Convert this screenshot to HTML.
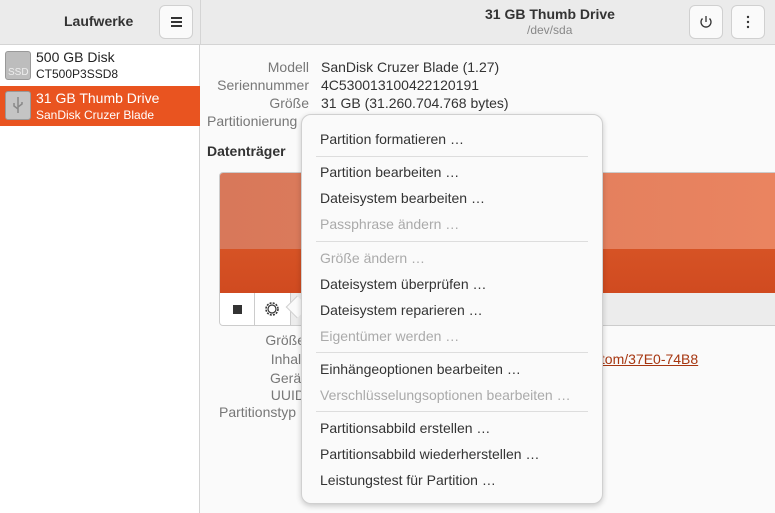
<!DOCTYPE html>
<html><head><meta charset="utf-8"><style>
*{margin:0;padding:0;box-sizing:border-box}
body{width:775px;height:513px;overflow:hidden;background:#fafafa;font-family:"Liberation Sans",sans-serif;font-size:14px;color:#333;position:relative}
.a{position:absolute;white-space:nowrap}
.hdr{position:absolute;left:0;top:0;width:775px;height:45px;background:#ebebeb;border-bottom:1px solid #d4d4d4}
.btn{position:absolute;width:34px;height:34px;border:1px solid #d0d0d0;border-radius:6px;background:#fafafa}
.side{position:absolute;left:0;top:45px;width:200px;height:468px;background:#fff;border-right:1px solid #d4d4d4}
.lab{position:absolute;text-align:right;color:#777;white-space:nowrap}
.menu{position:absolute;left:301px;top:114px;width:302px;height:390px;background:#fafafa;border:1px solid #d0d0d0;border-radius:10px;box-shadow:0 2px 6px rgba(0,0,0,.2)}
.mi{position:absolute;left:18px;white-space:nowrap;color:#333}
.dis{color:#aaa}
.sep{position:absolute;left:14px;width:272px;height:1px;background:#ddd}
</style></head><body>
<div class="hdr">
<div class="a" style="left:64px;top:13px;font-weight:bold;font-size:14px">Laufwerke</div>
<div class="btn" style="left:159px;top:5px"><div style="position:absolute;left:11px;top:11px;width:11px;height:1.5px;background:#333;box-shadow:0 4px 0 #333,0 8px 0 #333"></div></div>
<div style="position:absolute;left:200px;top:0;width:1px;height:45px;background:#d4d4d4"></div>
<div class="a" style="left:485px;top:6px;font-weight:bold">31 GB Thumb Drive</div>
<div class="a" style="left:527px;top:23px;font-size:12px;color:#888">/dev/sda</div>
<div class="btn" style="left:689px;top:5px"><svg width="34" height="34" style="position:absolute;left:-1px;top:-1px"><path d="M13.5 13.5a5 5 0 1 0 7 0M17 11v6" fill="none" stroke="#333" stroke-width="1.3"/></svg></div>
<div class="btn" style="left:731px;top:5px"><svg width="34" height="34" style="position:absolute;left:-1px;top:-1px"><circle cx="17" cy="12" r="1.2" fill="#333"/><circle cx="17" cy="17" r="1.2" fill="#333"/><circle cx="17" cy="22" r="1.2" fill="#333"/></svg></div>
</div>
<div class="side">
<div style="position:absolute;left:5px;top:6px;width:26px;height:29px;border:1px solid #999;border-radius:3px;background:#bdbdbd"><span style="position:absolute;left:2px;top:15px;font-size:10px;color:#eee">SSD</span></div>
<div class="a" style="left:36px;top:4px;color:#222">500 GB Disk</div>
<div class="a" style="left:36px;top:22px;font-size:12px;color:#222">CT500P3SSD8</div>
<div style="position:absolute;left:0;top:41px;width:200px;height:40px;background:#e95420"></div>
<div style="position:absolute;left:5px;top:46px;width:26px;height:29px;border:1px solid #999;border-radius:3px;background:#c4c4c4"><svg width="24" height="27"><path d="M12 5v16M12 17l-4-3v-3M12 15l4-3v-2" fill="none" stroke="#888" stroke-width="1.5"/></svg></div>
<div class="a" style="left:36px;top:45px;color:#fff">31 GB Thumb Drive</div>
<div class="a" style="left:36px;top:63px;font-size:12px;color:#fff">SanDisk Cruzer Blade</div>
</div>
<div class="lab" style="right:466px;top:59px">Modell</div>
<div class="lab" style="right:466px;top:77px">Seriennummer</div>
<div class="lab" style="right:466px;top:95px">Größe</div>
<div class="lab" style="left:207px;top:113px">Partitionierung</div>
<div class="a" style="left:321px;top:59px">SanDisk Cruzer Blade (1.27)</div>
<div class="a" style="left:321px;top:77px">4C530013100422120191</div>
<div class="a" style="left:321px;top:95px">31 GB (31.260.704.768 bytes)</div>
<div class="a" style="left:207px;top:143px;font-weight:bold">Datenträger</div>
<div style="position:absolute;left:219px;top:172px;width:560px;height:154px;border:1px solid #ccc;border-radius:4px;overflow:hidden;background:#ececec">
<div style="height:76px;background:linear-gradient(90deg,#d8785a,#ea8460)"></div>
<div style="height:44px;background:linear-gradient(180deg,#d65325,#d04a20)"></div>
<div style="position:absolute;left:0;top:120px;width:35px;height:34px;background:#fff;border-right:1px solid #ccc"><div style="position:absolute;left:13px;top:12px;width:9px;height:9px;background:#333"></div></div>
<div style="position:absolute;left:35px;top:120px;width:36px;height:34px;background:#fff;border-right:1px solid #ccc"><svg width="36" height="34"><circle cx="17" cy="16" r="6" fill="none" stroke="#333" stroke-width="1.5" stroke-dasharray="2 1.2"/><circle cx="17" cy="16" r="4" fill="none" stroke="#333" stroke-width="1.2"/></svg></div>
</div>
<div class="lab" style="right:470px;top:332px">Größe</div>
<div class="lab" style="right:470px;top:351px">Inhalt</div>
<div class="lab" style="right:470px;top:370px">Gerät</div>
<div class="lab" style="right:470px;top:387px">UUID</div>
<div class="lab" style="left:219px;top:404px">Partitionstyp</div>
<div class="a" style="left:597px;top:351px;color:#a63610;text-decoration:underline">/tom/37E0-74B8</div>
<div style="position:absolute;left:289px;top:299px;width:16px;height:16px;background:#fafafa;border-left:1px solid #d0d0d0;border-bottom:1px solid #d0d0d0;transform:rotate(45deg)"></div>
<div class="menu">
<div class="mi" style="top:16px">Partition formatieren …</div>
<div class="sep" style="top:41px"></div>
<div class="mi" style="top:49px">Partition bearbeiten …</div>
<div class="mi" style="top:75px">Dateisystem bearbeiten …</div>
<div class="mi dis" style="top:101px">Passphrase ändern …</div>
<div class="sep" style="top:126px"></div>
<div class="mi dis" style="top:135px">Größe ändern …</div>
<div class="mi" style="top:161px">Dateisystem überprüfen …</div>
<div class="mi" style="top:187px">Dateisystem reparieren …</div>
<div class="mi dis" style="top:213px">Eigentümer werden …</div>
<div class="sep" style="top:237px"></div>
<div class="mi" style="top:246px">Einhängeoptionen bearbeiten …</div>
<div class="mi dis" style="top:272px">Verschlüsselungsoptionen bearbeiten …</div>
<div class="sep" style="top:296px"></div>
<div class="mi" style="top:305px">Partitionsabbild erstellen …</div>
<div class="mi" style="top:331px">Partitionsabbild wiederherstellen …</div>
<div class="mi" style="top:357px">Leistungstest für Partition …</div>
</div>
</body></html>
